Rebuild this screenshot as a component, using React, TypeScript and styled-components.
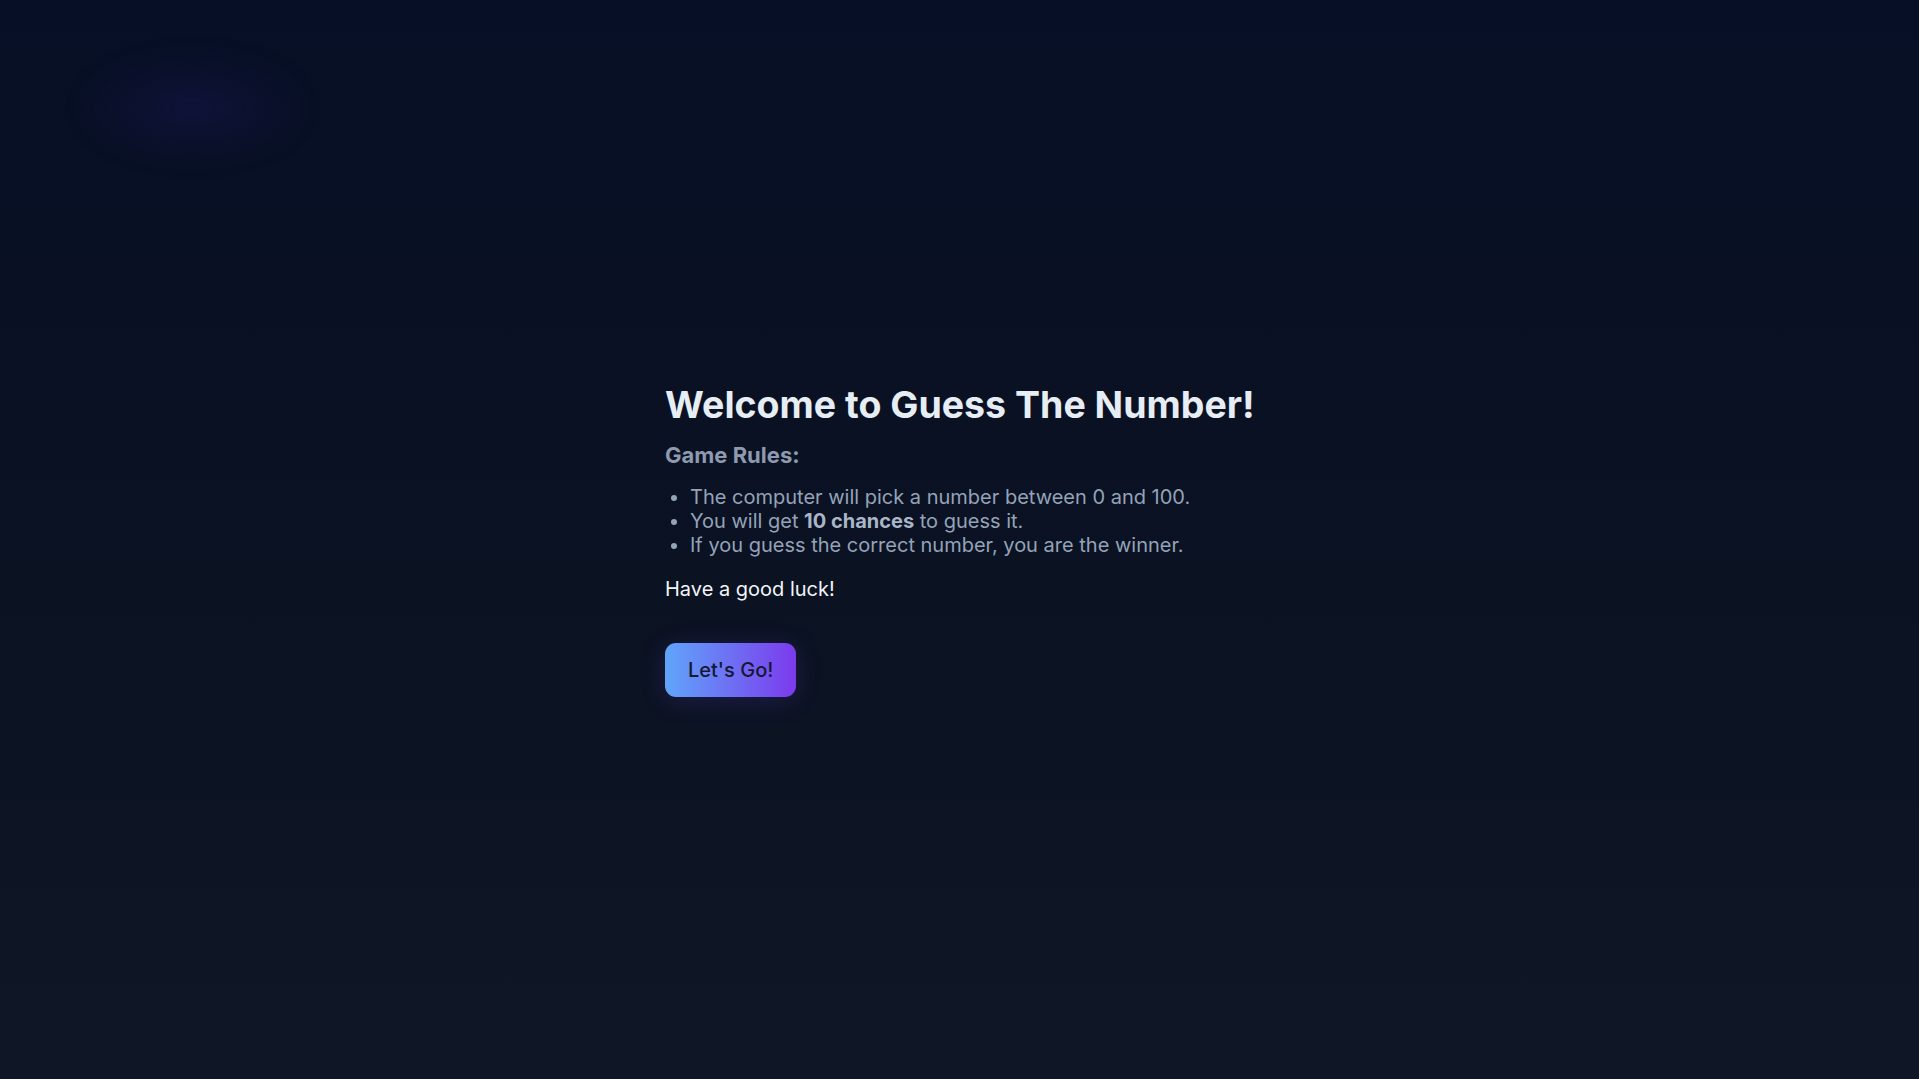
import React from "react";
import styled, { createGlobalStyle } from "styled-components";

const Global = createGlobalStyle`
  html, body { margin: 0; padding: 0; height: 100%; }
  body {
    font-family: Inter, "Noto Sans", "Liberation Sans", sans-serif;
    background: linear-gradient(180deg, #070f26 0%, #0b1222 55%, #0f1625 100%);
    min-height: 100vh;
  }
  #root { min-height: 100vh; }
`;

const Page = styled.main`
  position: relative;
  min-height: 100vh;
  display: flex;
  align-items: center;
  justify-content: center;
  overflow: hidden;
`;

const Glow = styled.div`
  position: absolute;
  left: 78px;
  top: 50px;
  width: 230px;
  height: 115px;
  border-radius: 50%;
  background: radial-gradient(ellipse at center, rgba(17, 19, 60, 0.9) 0%, rgba(14, 18, 52, 0.55) 40%, rgba(10, 16, 40, 0) 72%);
  filter: blur(8px);
  pointer-events: none;
`;

const Card = styled.section`
  width: 589px;
  display: flex;
  flex-direction: column;
  align-items: flex-start;
`;

const Title = styled.h1`
  margin: 0;
  font-size: 37.5px;
  line-height: 1.2;
  font-weight: 700;
  color: #e6edf5;
  white-space: nowrap;
`;

const Subtitle = styled.h2`
  margin: 15px 0 0;
  font-size: 22px;
  line-height: 1.2;
  font-weight: 700;
  color: #8d9ab0;
`;

const Rules = styled.ul`
  margin: 16px 0 0;
  padding-left: 25px;
  font-size: 20px;
  line-height: 24px;
  color: #94a3b8;
`;

const Rule = styled.li`
  strong {
    font-weight: 700;
    color: #a9b6c8;
  }
`;

const Luck = styled.p`
  margin: 20px 0 0;
  font-size: 20px;
  line-height: 24px;
  color: #f1f5f9;
`;

const GoButton = styled.button`
  margin-top: 42px;
  height: 54px;
  padding: 0 23px;
  border: none;
  border-radius: 11px;
  font-family: inherit;
  font-size: 20px;
  font-weight: 500;
  color: #141833;
  background: linear-gradient(90deg, #60a5fa 0%, #7c3aed 100%);
  box-shadow: 0 4px 26px rgba(99, 70, 230, 0.2);
  cursor: pointer;
`;

export default function App() {
  return (
    <>
      <Global />
      <Page>
        <Glow />
        <Card>
          <Title>Welcome to Guess The Number!</Title>
          <Subtitle>Game Rules:</Subtitle>
          <Rules>
            <Rule>The computer will pick a number between 0 and 100.</Rule>
            <Rule>
              You will get <strong>10 chances</strong> to guess it.
            </Rule>
            <Rule>If you guess the correct number, you are the winner.</Rule>
          </Rules>
          <Luck>Have a good luck!</Luck>
          <GoButton>Let's Go!</GoButton>
        </Card>
      </Page>
    </>
  );
}
